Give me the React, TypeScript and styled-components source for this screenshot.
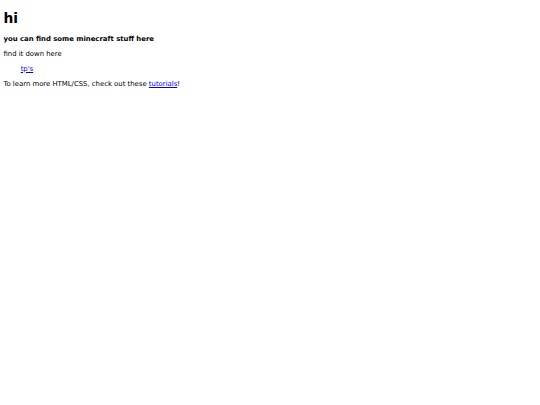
import React from 'react';
import styled, { createGlobalStyle } from 'styled-components';

const S = 0.43;
const px = (n: number) => `${(n * S).toFixed(2)}px`;

const GlobalStyle = createGlobalStyle`
  html, body {
    background: #fff;
  }
  body {
    margin: 0.5px ${px(8)} ${px(8)};
    font-family: "DejaVu Sans", sans-serif;
    font-size: ${px(16)};
    color: #000;
  }
`;

const Title = styled.h1`
  font-size: ${px(32)};
  font-weight: bold;
  margin: ${px(21.44)} 0;
`;

const Para = styled.p<{ $bold?: boolean }>`
  margin: ${px(16)} 0;
  font-weight: ${p => (p.$bold ? 'bold' : 'normal')};
`;

const LinkList = styled.ul`
  list-style: none;
  margin: ${px(16)} 0;
  padding-left: ${px(40)};
`;

const Link = styled.a`
  color: #0000ee;
  text-decoration: underline;
`;

export default function App() {
  return <>
    <GlobalStyle />
    <Title>hi</Title>
    <Para $bold>you can find some minecraft stuff here</Para>
    <Para>find it down here</Para>
    <LinkList>
      <li><Link href="#">tp's</Link></li>
    </LinkList>
    <Para>To learn more HTML/CSS, check out these <Link href="#">tutorials</Link>!</Para>
  </>
}
